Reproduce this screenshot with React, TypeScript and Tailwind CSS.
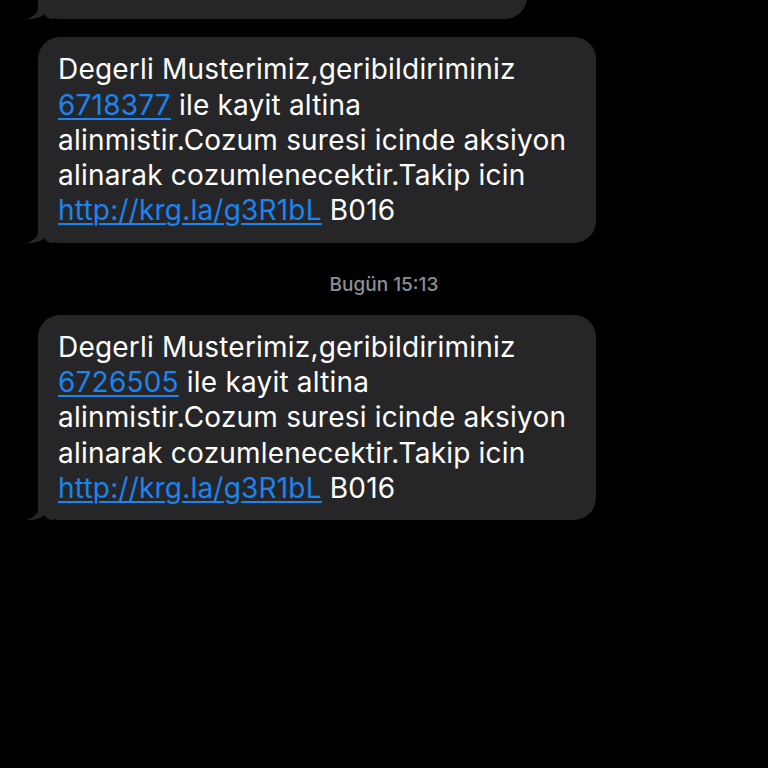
const font = { fontFamily: 'Inter, "Noto Sans", sans-serif' };

function Tail() {
  return (
    <svg
      className="absolute -left-[12px] bottom-0"
      width="28"
      height="22"
      viewBox="0 0 28 22"
    >
      <path
        d="M12 0 V11 C12 16 7 20 0 22 C8 22.5 14 20.5 18 17.5 C20 20 23 22 28 22 V0 Z"
        fill="#262628"
      />
    </svg>
  );
}

function Bubble({ children, className = '' }: { children: React.ReactNode; className?: string }) {
  return (
    <div className={`relative rounded-[22px] bg-[#262628] px-[20px] text-[28px] leading-[35.3px] tracking-[0.2px] text-white ${className}`}>
      {children}
      <Tail />
    </div>
  );
}

const link = 'text-[#1b84f0] underline decoration-[1.5px] underline-offset-[3px]';

function Message({ id }: { id: string }) {
  return (
    <Bubble className="w-[558px] pt-[15px] pb-[14px]">
      <p>
        Degerli Musterimiz,geribildiriminiz
        <br />
        <span className={link}>{id}</span> ile kayit altina
        <br />
        alinmistir.Cozum suresi icinde aksiyon
        <br />
        alinarak cozumlenecektir.Takip icin
        <br />
        <span className={link}>http://krg.la/g3R1bL</span> B016
      </p>
    </Bubble>
  );
}

export default function App() {
  return (
    <div className="h-[768px] w-[768px] overflow-hidden bg-black" style={font}>
      <div className="flex flex-col pl-[38px]">
        <div className="-mt-[28px]">
          <Bubble className="w-[489px] pb-[12px]">
            <p>edebilirsiniz. B016</p>
          </Bubble>
        </div>

        <div className="mt-[18px]">
          <Message id="6718377" />
        </div>

        <div className="flex h-[72px] w-[692px] justify-center pt-[32px]">
          <span className="text-[19px] leading-[20px] font-medium text-[#8e8e93]">Bugün 15:13</span>
        </div>

        <Message id="6726505" />
      </div>
    </div>
  );
}
